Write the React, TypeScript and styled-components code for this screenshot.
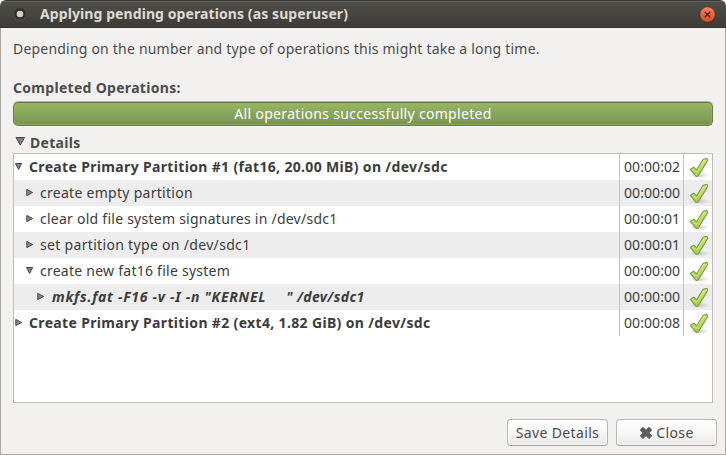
import React from "react";
import styled, { createGlobalStyle, css } from "styled-components";

const GlobalStyle = createGlobalStyle`
  * { box-sizing: border-box; }
  html, body { margin: 0; background: #fff; }
  body { font-family: "Noto Sans", "Open Sans", sans-serif; font-size: 14px; color: #4c4c4c; }
`;

const Window = styled.div`
  width: 726px;
  height: 455px;
  display: flex;
  flex-direction: column;
  border-radius: 6px 6px 0 0;
  overflow: hidden;
  background: #f2f1f0;
`;

const TitleBar = styled.header`
  flex: none;
  height: 28px;
  display: flex;
  align-items: center;
  padding: 0 10px 0 13px;
  background: linear-gradient(#504f4a, #3c3b37);
  border-top: 1px solid #3b3a36;
  border-bottom: 1px solid #353430;
  box-shadow: inset 0 1px 0 #65635d;
`;

const WindowIcon = styled.svg`
  width: 14px;
  height: 14px;
  margin-right: 13px;
`;

const Title = styled.h1`
  flex: 1;
  margin: 0;
  padding-bottom: 2px;
  font-size: 14px;
  line-height: 19px;
  font-weight: 700;
  letter-spacing: 0.09px;
  color: #dfdbd2;
  white-space: pre;
`;

const CloseIcon = styled.svg`
  width: 17px;
  height: 17px;
`;

const Body = styled.main`
  flex: 1;
  min-height: 0;
  display: flex;
  flex-direction: column;
  padding: 11px 12px 8px;
  border: 1px solid #aaa9a6;
  border-top: 0;
`;

const Text = styled.span<{ $spacing: number; $bold?: boolean; $italic?: boolean }>`
  line-height: 19px;
  white-space: pre;
  letter-spacing: ${(p) => p.$spacing}px;
  ${(p) => p.$bold && css`font-weight: 700;`}
  ${(p) => p.$italic && css`font-style: italic;`}
`;

const Heading = styled.div`
  margin-top: 20px;
  height: 19px;
  display: flex;
`;

const ProgressBar = styled.div`
  flex: none;
  height: 24px;
  margin-top: 5px;
  display: flex;
  justify-content: center;
  padding-top: 1px;
  border: 1px solid #677f43;
  border-top-color: #63753f;
  border-radius: 5px;
  background: linear-gradient(#96b665, #789550);
  box-shadow: inset 0 0 0 1px rgba(150, 190, 95, 0.45), 0 -1px 0 #b5b4ae, 0 1px 0 #fafafa;
  color: #fff;
`;

const Expander = styled.div`
  height: 19px;
  margin-top: 7px;
  padding-left: 2px;
  display: flex;
  gap: 4px;
`;

const List = styled.div`
  flex: none;
  height: 250px;
  margin-top: 1px;
  border: 1px solid #c0bdb8;
  background: #fff;
  color: #3c3c3c;
`;

const Row = styled.div<{ $shaded: boolean }>`
  height: 26px;
  display: grid;
  grid-template-columns: 1fr 64px 29px;
  background: ${(p) => (p.$shaded ? "#ededed" : "#fff")};
`;

const NameCell = styled.div<{ $depth: number }>`
  display: flex;
  align-items: center;
  gap: ${(p) => (p.$depth === 2 ? 5 : 4)}px;
  padding: 0 0 1px ${(p) => p.$depth * 11}px;
`;

const TimeCell = styled.div`
  display: flex;
  align-items: center;
  padding: 0 0 1px 4px;
  border-left: 1px solid #c6c4c1;
`;

const StatusCell = styled.div`
  display: flex;
  align-items: center;
  padding-left: 3px;
  border-left: 1px solid #c6c4c1;
`;

const Actions = styled.footer`
  margin-top: auto;
  display: flex;
  justify-content: flex-end;
  gap: 8px;
  margin-right: -4px;
`;

const Button = styled.button`
  width: 101px;
  height: 27px;
  padding: 0;
  display: flex;
  align-items: center;
  justify-content: center;
  gap: 3px;
  font: inherit;
  color: #4c4c4c;
  border: 1px solid #bab6b0;
  border-bottom-color: #a5a29d;
  border-radius: 4px;
  background: linear-gradient(#fff, #f9f8f8 45%, #ebeae9);
  box-shadow: inset 0 0 0 1px rgba(255, 255, 255, 0.7);
`;

const Glyph = styled.svg`
  flex: none;
  display: block;
`;

function Arrow({ open, large }: { open: boolean; large?: boolean }) {
  if (large)
    return (
      <Glyph width="11" height="16" viewBox="0 0 11 16">
        <path d="M1 4.5H9.6L5.3 12Z" fill="#7d7d7d" stroke="#454545" />
      </Glyph>
    );
  return (
    <Glyph width="11" height="13" viewBox="0 0 11 13">
      <path
        d={open ? "M1.5 3.5H7.7L4.6 9.4Z" : "M1.8 3.4V9.6L7.6 6.5Z"}
        fill="#858585"
        stroke="#484848"
      />
    </Glyph>
  );
}

function Check() {
  return (
    <Glyph width="24" height="24" viewBox="0 0 24 24">
      <defs>
        <linearGradient id="leaf" x1="0" y1="0" x2="0" y2="1">
          <stop offset="0" stopColor="#d3e97c" />
          <stop offset="1" stopColor="#a9c93c" />
        </linearGradient>
        <radialGradient id="shade">
          <stop offset="0" stopColor="#000" stopOpacity="0.18" />
          <stop offset="1" stopColor="#000" stopOpacity="0" />
        </radialGradient>
      </defs>
      <ellipse cx="12" cy="20.3" rx="11" ry="3" fill="url(#shade)" />
      <path
        d="M3.3 14.4 L6.6 12.2 L9.6 14.9 L16.2 4.2 L20 3.4 L20.7 5.4 L11.2 21 L9.2 21.5 Z"
        fill="url(#leaf)"
        stroke="#739f4e"
        strokeWidth="1.1"
        strokeLinejoin="round"
      />
      <path d="M5 14.2L9.6 17.2L17 5.2" fill="none" stroke="#e6f3a0" strokeWidth="0.8" opacity="0.7" />
    </Glyph>
  );
}

interface Operation {
  name: string;
  spacing: number;
  time: string;
  depth: number;
  open?: boolean;
  bold?: boolean;
  italic?: boolean;
  tail?: string;
}

const operations: Operation[] = [
  { name: "Create Primary Partition #1 (fat16, 20.00 MiB) on /dev/sdc", spacing: 0.34, time: "00:00:02", depth: 0, open: true, bold: true },
  { name: "create empty partition", spacing: 0.28, time: "00:00:00", depth: 1 },
  { name: "clear old file system signatures in /dev/sdc1", spacing: 0.25, time: "00:00:01", depth: 1 },
  { name: "set partition type on /dev/sdc1", spacing: 0.32, time: "00:00:01", depth: 1 },
  { name: "create new fat16 file system", spacing: 0.25, time: "00:00:00", depth: 1, open: true },
  { name: 'mkfs.fat -F16 -v -I -n "KERNEL', spacing: 0.72, time: "00:00:00", depth: 2, bold: true, italic: true, tail: '" /dev/sdc1' },
  { name: "Create Primary Partition #2 (ext4, 1.82 GiB) on /dev/sdc", spacing: 0.345, time: "00:00:08", depth: 0, bold: true },
];

const Tail = styled(Text)`
  margin-left: 15px;
`;

export default function App() {
  return (
    <>
      <GlobalStyle />
      <Window>
        <TitleBar>
          <WindowIcon viewBox="0 0 14 14">
            <circle cx="7" cy="7.6" r="6" fill="#6e6c66" />
            <circle cx="7" cy="7" r="6" fill="#32312d" />
            <circle cx="7" cy="7" r="3.3" fill="#d3d0c9" />
          </WindowIcon>
          <Title>Applying pending operations (as superuser)</Title>
          <CloseIcon viewBox="0 0 17 17">
            <defs>
              <linearGradient id="ember" x1="0" y1="0" x2="0" y2="1">
                <stop offset="0" stopColor="#f5896a" />
                <stop offset="0.5" stopColor="#ec6139" />
                <stop offset="1" stopColor="#e24d16" />
              </linearGradient>
            </defs>
            <circle cx="8.5" cy="8.5" r="7.8" fill="url(#ember)" stroke="#35332f" strokeWidth="0.8" />
            <path d="M5.7 5.7L11.3 11.3M11.3 5.7L5.7 11.3" stroke="#44261a" strokeWidth="1.3" />
          </CloseIcon>
        </TitleBar>
        <Body>
          <Text $spacing={0.205}>Depending on the number and type of operations this might take a long time.</Text>
          <Heading>
            <Text $spacing={0.3} $bold>Completed Operations:</Text>
          </Heading>
          <ProgressBar>
            <Text $spacing={0.31}>All operations successfully completed</Text>
          </ProgressBar>
          <Expander>
            <Arrow open large />
            <Text $spacing={0.3} $bold>Details</Text>
          </Expander>
          <List>
            {operations.map((op, i) => (
              <Row key={op.name} $shaded={i % 2 === 1}>
                <NameCell $depth={op.depth}>
                  <Arrow open={!!op.open} />
                  <Text $spacing={op.spacing} $bold={op.bold} $italic={op.italic}>{op.name}</Text>
                  {op.tail && <Tail $spacing={0.37} $bold $italic>{op.tail}</Tail>}
                </NameCell>
                <TimeCell>
                  <Text $spacing={0.08}>{op.time}</Text>
                </TimeCell>
                <StatusCell>
                  <Check />
                </StatusCell>
              </Row>
            ))}
          </List>
          <Actions>
            <Button>
              <Text $spacing={0.35}>Save Details</Text>
            </Button>
            <Button>
              <Glyph width="14" height="14" viewBox="0 0 14 14">
                <path
                  d="M4 1.3L7 4.2L10 1.3L12.8 4L9.9 6.9L12.8 9.8L10 12.5L7 9.7L4 12.5L1.2 9.8L4.1 6.9L1.2 4Z"
                  fill="#5e5e5e"
                  stroke="#4b4b4b"
                  strokeWidth="0.8"
                  strokeLinejoin="round"
                />
              </Glyph>
              <Text $spacing={0.37}>Close</Text>
            </Button>
          </Actions>
        </Body>
      </Window>
    </>
  );
}
